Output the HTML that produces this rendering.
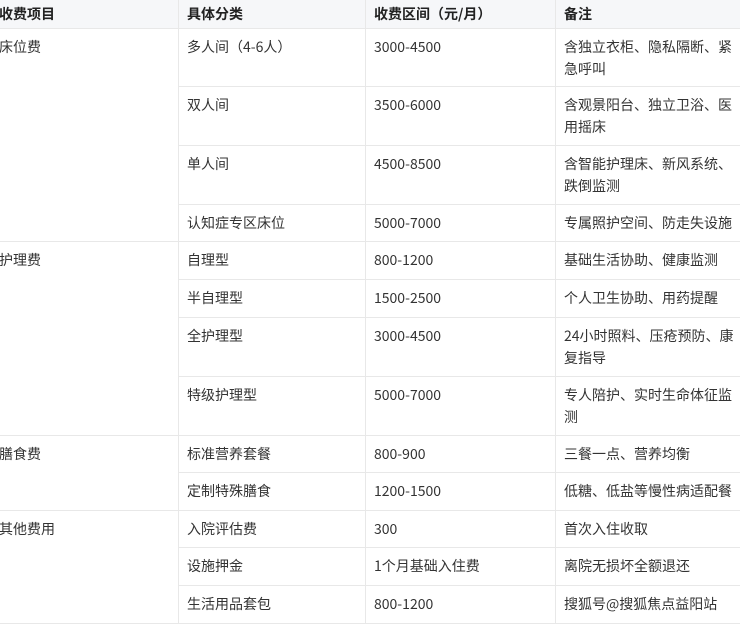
<!DOCTYPE html>
<html><head><meta charset="utf-8"><style>
html,body{margin:0;padding:0;background:#fff;width:740px;height:621px;overflow:hidden}
table{position:absolute;left:-10px;top:-1px;width:760px;border-collapse:collapse;table-layout:fixed;font-family:"Noto Sans CJK SC","Liberation Sans",sans-serif;font-size:14px;color:#333}
td,th{border:1px solid #e8e8e8;padding:7px 8px 5px 8px;line-height:22px;vertical-align:top;text-align:left}
th{background:#f6f7f9;font-weight:bold;color:#222;height:16px;padding-top:3px;padding-bottom:3px;line-height:22px}
</style></head><body>
<table>
<colgroup><col style="width:188px"><col style="width:187px"><col style="width:190px"><col style="width:195px"></colgroup>
<tr><th>收费项目</th><th>具体分类</th><th>收费区间（元/月）</th><th>备注</th></tr>
<tr style="height:58px"><td rowspan="4">床位费</td><td>多人间（4-6人）</td><td>3000-4500</td><td>含独立衣柜、隐私隔断、紧急呼叫</td></tr>
<tr style="height:59px"><td>双人间</td><td>3500-6000</td><td>含观景阳台、独立卫浴、医用摇床</td></tr>
<tr style="height:59px"><td>单人间</td><td>4500-8500</td><td>含智能护理床、新风系统、跌倒监测</td></tr>
<tr style="height:37px"><td>认知症专区床位</td><td>5000-7000</td><td>专属照护空间、防走失设施</td></tr>
<tr style="height:38px"><td rowspan="4">护理费</td><td>自理型</td><td>800-1200</td><td>基础生活协助、健康监测</td></tr>
<tr style="height:38px"><td>半自理型</td><td>1500-2500</td><td>个人卫生协助、用药提醒</td></tr>
<tr style="height:59px"><td>全护理型</td><td>3000-4500</td><td>24小时照料、压疮预防、康复指导</td></tr>
<tr style="height:59px"><td>特级护理型</td><td>5000-7000</td><td>专人陪护、实时生命体征监测</td></tr>
<tr style="height:37px"><td rowspan="2">膳食费</td><td>标准营养套餐</td><td>800-900</td><td>三餐一点、营养均衡</td></tr>
<tr style="height:38px"><td>定制特殊膳食</td><td>1200-1500</td><td>低糖、低盐等慢性病适配餐</td></tr>
<tr style="height:37px"><td rowspan="3">其他费用</td><td>入院评估费</td><td>300</td><td>首次入住收取</td></tr>
<tr style="height:38px"><td>设施押金</td><td>1个月基础入住费</td><td>离院无损坏全额退还</td></tr>
<tr style="height:38px"><td>生活用品套包</td><td>800-1200</td><td>搜狐号@搜狐焦点益阳站</td></tr>
</table>
</body></html>
